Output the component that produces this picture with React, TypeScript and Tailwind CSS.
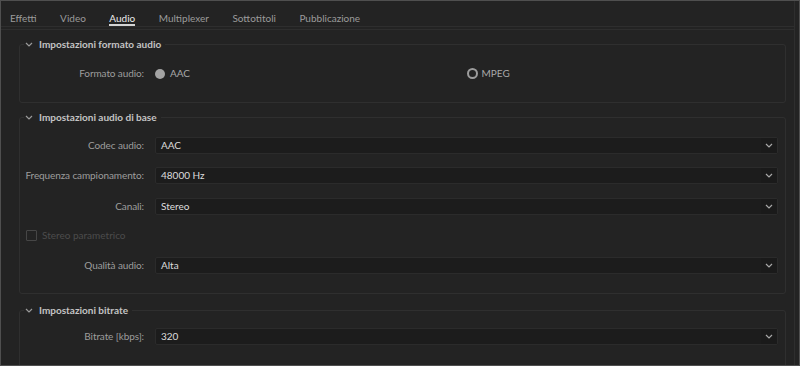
import React from "react";

const tabs = ["Effetti", "Video", "Audio", "Multiplexer", "Sottotitoli", "Pubblicazione"];

const Chevron = () => (
    <svg width="8" height="5" viewBox="0 0 8 5" className="shrink-0">
        <polyline points="1,1 4,4 7,1" fill="none" stroke="#9a9a9a" strokeWidth="1.2" />
    </svg>
);

const Section = ({ title, className, children }: { title: string; className?: string; children: React.ReactNode }) => (
    <fieldset className={`border border-[#2f2f2f] rounded-[3px] pr-[7px] ${className ?? ""}`}>
        <legend className="ml-[4px] px-[1px] flex items-center h-[14px]">
            <Chevron />
            <span className="ml-[6px] pr-[3px] text-[10px] font-bold text-[#c4c4c4] leading-[14px]">{title}</span>
        </legend>
        {children}
    </fieldset>
);

const Label = ({ children }: { children: React.ReactNode }) => (
    <div className="w-[124px] shrink-0 whitespace-nowrap text-right text-[10px] tracking-[-0.1px] text-[#9d9d9d] leading-[17px]">
        {children}
    </div>
);

const Select = ({ value }: { value: string }) => (
    <div className="ml-[11px] flex-1 h-[17px] flex items-center bg-[#1c1c1c] border border-[#2b2b2b] rounded-[2px]">
        <span className="flex-1 pl-[5px] text-[10px] text-[#dcdcdc] leading-[15px]">{value}</span>
        <div className="w-[16px] h-full flex items-center justify-center bg-[#1a1a1a]">
            <svg width="8" height="5" viewBox="0 0 8 5">
                <polyline points="1,1 4,4 7,1" fill="none" stroke="#a8a8a8" strokeWidth="1.2" />
            </svg>
        </div>
    </div>
);

const Row = ({ label, value, className }: { label: string; value: string; className?: string }) => (
    <div className={`flex items-center ${className ?? ""}`}>
        <Label>{label}</Label>
        <Select value={value} />
    </div>
);

export default function App() {
    return (
        <div
            className="w-[800px] h-[366px] overflow-hidden bg-[#232323] border border-[#4f4f4f] flex"
            style={{ fontFamily: "Lato, 'Liberation Sans', sans-serif" }}
        >
            <div className="flex-1 flex flex-col border-r border-[#2e2e2e]">
                {/* tab bar */}
                <div className="h-[26px] flex items-start pl-[9px] gap-[23.5px] border-b border-[#2e2e2e]">
                    {tabs.map((t) => (
                        <div
                            key={t}
                            className={`h-full pt-[10px] text-[10px] leading-[14px] ${
                                t === "Audio"
                                    ? "text-[#ececec] border-b-2 border-[#d4d4d4]"
                                    : "text-[#9b9b9b]"
                            }`}
                        >
                            {t}
                        </div>
                    ))}
                </div>

                <div className="mt-[2px] border-t border-[#2e2e2e] pl-[18px] pr-[8px] pt-[7px]">
                    <Section title="Impostazioni formato audio" className="pt-[14px] pb-[20px]">
                        <div className="flex items-center">
                            <Label>Formato audio:</Label>
                            <div className="ml-[11px] flex-1 grid grid-cols-2">
                                <div className="flex items-center gap-[5px]">
                                    <div className="w-[10px] h-[10px] rounded-full bg-[#a3a3a3]" />
                                    <span className="text-[10px] text-[#a8a8a8]">AAC</span>
                                </div>
                                <div className="flex items-center gap-[4px]">
                                    <div className="w-[11px] h-[11px] rounded-full border-2 border-[#9c9c9c]" />
                                    <span className="text-[10px] text-[#a8a8a8]">MPEG</span>
                                </div>
                            </div>
                        </div>
                    </Section>

                    <Section title="Impostazioni audio di base" className="mt-[7px] pt-[13px] pb-[19px]">
                        <div className="flex flex-col">
                            <Row label="Codec audio:" value="AAC" />
                            <Row label="Frequenza campionamento:" value="48000 Hz" className="mt-[13px]" />
                            <Row label="Canali:" value="Stereo" className="mt-[14px]" />
                            <div className="mt-[14px] ml-[6px] flex items-center h-[13px]">
                                <div className="w-[11px] h-[11px] border border-[#464646] rounded-[1px]" />
                                <span className="ml-[5px] text-[10px] text-[#4c4c4c]">Stereo parametrico</span>
                            </div>
                            <Row label="Qualità audio:" value="Alta" className="mt-[15px]" />
                        </div>
                    </Section>

                    <Section title="Impostazioni bitrate" className="mt-[9px] pt-[11px] pb-[24px]">
                        <Row label="Bitrate [kbps]:" value="320" />
                    </Section>
                </div>
            </div>
            <div className="w-[4px]" />
        </div>
    );
}
